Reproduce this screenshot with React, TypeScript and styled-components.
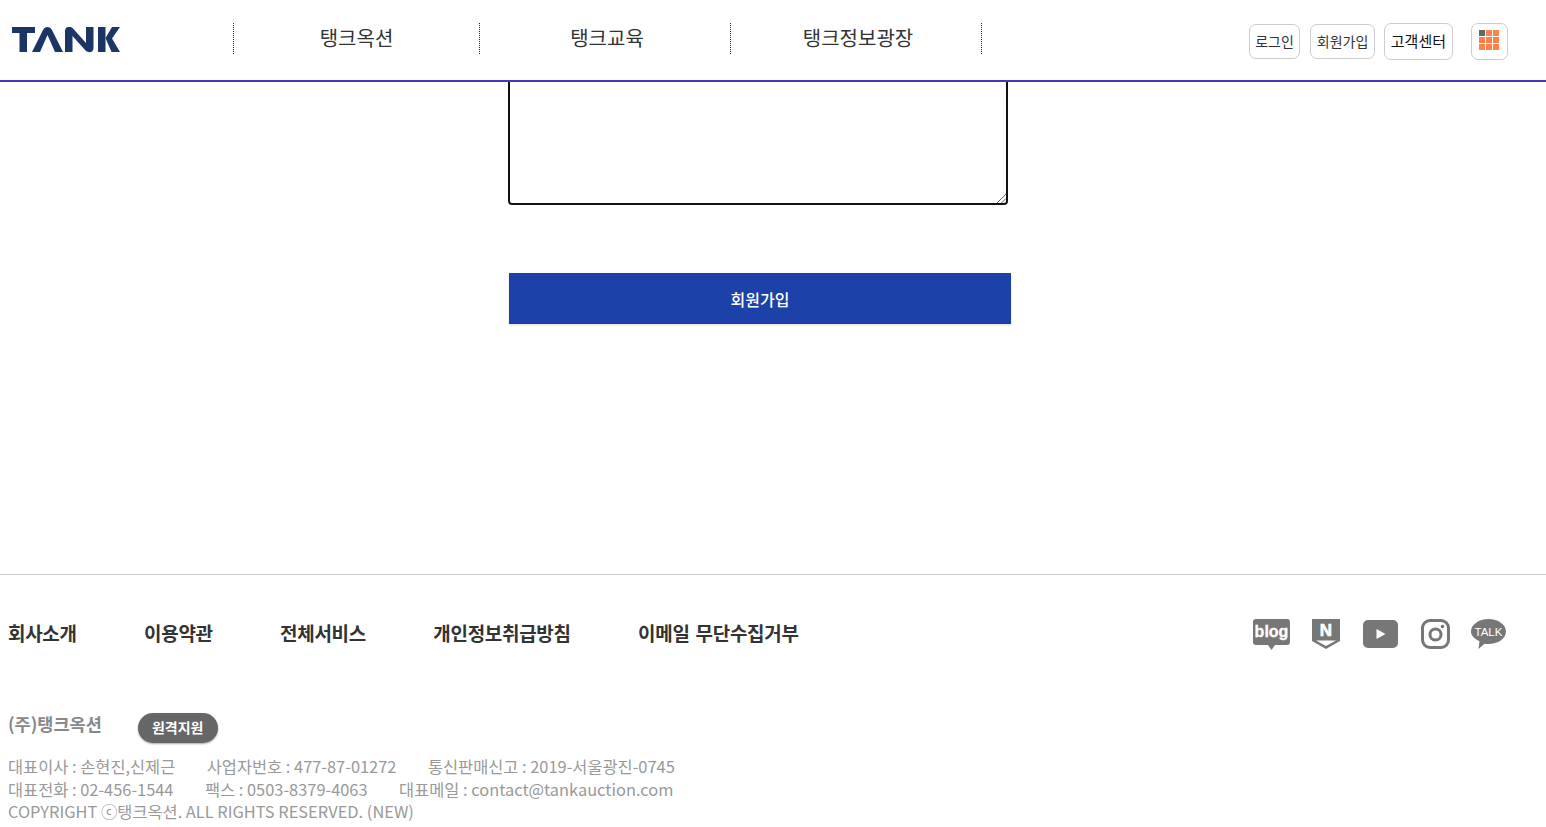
import styled, { createGlobalStyle } from "styled-components";

const GlobalStyle = createGlobalStyle`
  html, body {
    margin: 0;
    padding: 0;
    background: #fff;
    overflow: hidden;
  }
  body {
    font-family: "Noto Sans CJK KR", "Noto Sans", sans-serif;
  }
`;

const menus = ["탱크옥션", "탱크교육", "탱크정보광장"];
const footerLinks = ["회사소개", "이용약관", "전체서비스", "개인정보취급방침", "이메일 무단수집거부"];

const Logo = () => (
  <svg width="108" height="26" viewBox="0 0 108 26" fill="#1b3564">
    <path d="M0 0h23v6h-8v19H7.500V6H0z" />
    <path d="M20 25L31 3c2-4 7-4 9 0L51 25h-8L35.500 8 28 25z" />
    <path d="M53 25V4c0-4.500 5-5.500 8-2.500L74 16V0h7.500v21c0 4.500-5 5.500-8 2.500L60.500 9v16z" />
    <path d="M86 0h7.500v25H86z" />
    <path d="M93.500 11L100 0h8l-8 11.500L108 25h-8.500z" />
  </svg>
);

const BlogIcon = () => (
  <svg width="37" height="31" viewBox="0 0 37 31">
    <path d="M3 0h31a3 3 0 0 1 3 3v20a3 3 0 0 1-3 3H22l-3.500 5-3.500-5H3a3 3 0 0 1-3-3V3a3 3 0 0 1 3-3z" fill="#777" />
    <text x="18.500" y="18" textAnchor="middle" fontSize="16" fontWeight="700" fill="#fff" stroke="#fff" strokeWidth="0.3" fontFamily="Liberation Sans, sans-serif">blog</text>
  </svg>
);

const NaverIcon = () => (
  <svg width="29" height="30" viewBox="0 0 29 30">
    <path d="M0 0h28v22L14 30 0 22z" fill="#777" />
    <path d="M4 21.500h20L14 27z" fill="#fff" />
    <text x="14" y="17" textAnchor="middle" fontSize="17" fontWeight="700" fill="#fff" fontFamily="Liberation Sans, sans-serif" stroke="#fff" strokeWidth="0.6">N</text>
  </svg>
);

const YoutubeIcon = () => (
  <svg width="36" height="28" viewBox="0 0 36 28">
    <rect width="35" height="28" rx="5" fill="#777" />
    <path d="M13.500 9l9 5-9 5z" fill="#fff" />
  </svg>
);

const InstaIcon = () => (
  <svg width="28" height="30" viewBox="0 0 28 30" fill="none" stroke="#777" overflow="visible">
    <rect x="1.500" y="1.500" width="26" height="27" rx="7.500" strokeWidth="3" />
    <circle cx="14.500" cy="15.500" r="5.500" strokeWidth="3" />
    <circle cx="21.500" cy="7.500" r="1.800" fill="#777" stroke="none" />
  </svg>
);

const TalkIcon = () => (
  <svg width="35" height="30" viewBox="0 0 35 30">
    <path d="M17.500 0C27 0 35 5.500 35 12.500S27 25 17.500 25c-1.500 0-2.500 0-4-.3L7.500 30l1-7.800C3.500 20 0 16.500 0 12.500 0 5.500 8 0 17.500 0z" fill="#777" />
    <text x="17.500" y="17" textAnchor="middle" fontSize="11.500" fill="#fff" fontFamily="Liberation Sans, sans-serif">TALK</text>
  </svg>
);

const ResizeMark = () => (
  <svg width="10" height="10" viewBox="0 0 10 10" fill="none" stroke="#666" strokeWidth="1">
    <path d="M1 10L10 1M5.500 10L10 5.500" />
  </svg>
);

export default function App() {
  return (
    <>
      <GlobalStyle />
      <Header>
        <LogoBox>
          <Logo />
        </LogoBox>
        <Nav>
          {menus.map((menu) => (
            <NavItem key={menu}>{menu}</NavItem>
          ))}
        </Nav>
        <Utility>
          <UtilButton>로그인</UtilButton>
          <UtilButton>회원가입</UtilButton>
          <UtilButton $large>고객센터</UtilButton>
          <GridButton aria-label="전체메뉴">
            {Array.from({ length: 9 }).map((_, i) => (
              <GridCell key={i} $first={i === 0} />
            ))}
          </GridButton>
        </Utility>
      </Header>
      <Main>
        <MemoWrap>
          <Memo />
          <ResizeHandle>
            <ResizeMark />
          </ResizeHandle>
        </MemoWrap>
        <SubmitButton>회원가입</SubmitButton>
      </Main>
      <Footer>
        <FooterTop>
          <FooterNav>
            {footerLinks.map((link) => (
              <FooterLink key={link}>{link}</FooterLink>
            ))}
          </FooterNav>
          <Social>
            <BlogIcon />
            <NaverIcon />
            <YoutubeIcon />
            <InstaIcon />
            <TalkIcon />
          </Social>
        </FooterTop>
        <CompanyRow>
          <CompanyName>(주)탱크옥션</CompanyName>
          <RemoteButton>원격지원</RemoteButton>
        </CompanyRow>
        <InfoLine>
          <span>대표이사 : 손현진,신제근</span>
          <span>사업자번호 : 477-87-01272</span>
          <span>통신판매신고 : 2019-서울광진-0745</span>
        </InfoLine>
        <InfoLine>
          <span>대표전화 : 02-456-1544</span>
          <span>팩스 : 0503-8379-4063</span>
          <span>대표메일 : contact@tankauction.com</span>
        </InfoLine>
        <InfoLine>COPYRIGHT ⓒ탱크옥션. ALL RIGHTS RESERVED. (NEW)</InfoLine>
      </Footer>
    </>
  );
}

const Header = styled.header`
  position: relative;
  z-index: 10;
  display: flex;
  align-items: center;
  height: 80px;
  background: #fff;
  border-bottom: 2px solid #4338b5;
`;
const LogoBox = styled.div`
  display: flex;
  width: 221px;
  padding-left: 12px;
  margin-top: -1px;
`;
const Nav = styled.nav`
  display: flex;
  height: 31px;
  margin-top: -4px;
  border-left: 1px dotted #222;
`;
const NavItem = styled.a`
  display: flex;
  align-items: center;
  justify-content: center;
  width: 251px;
  padding: 0 0 1px 4px;
  border-right: 1px dotted #222;
  font-size: 20px;
  color: #333;
  box-sizing: border-box;
  &:first-child {
    width: 246px;
    padding-left: 0;
  }
`;
const Utility = styled.div`
  display: flex;
  align-items: center;
  margin: 3px 38px 0 auto;
  gap: 9px;
`;
const UtilButton = styled.button<{ $large?: boolean }>`
  height: ${(p) => (p.$large ? "37px" : "35px")};
  padding: 0 ${(p) => (p.$large ? "6px" : "5.500px")} 2px;
  background: #fff;
  border: 1px solid #ccc;
  border-radius: 7px;
  font-family: inherit;
  font-size: ${(p) => (p.$large ? "15px" : "14px")};
  color: ${(p) => (p.$large ? "#111" : "#333")};
  white-space: nowrap;
  &:first-child {
    margin-right: 1px;
  }
`;
const GridButton = styled.button`
  display: grid;
  grid-template-columns: repeat(3, 6px);
  grid-auto-rows: 6px;
  gap: 1px;
  align-content: center;
  justify-content: center;
  width: 37px;
  height: 37px;
  margin-left: 9px;
  padding: 0 1px 3px 0;
  background: #fff;
  border: 1px solid #ccc;
  border-radius: 7px;
`;
const GridCell = styled.span<{ $first?: boolean }>`
  background: ${(p) => (p.$first ? "#666" : "#ff8149")};
`;
const Main = styled.main`
  display: flex;
  flex-direction: column;
  align-items: flex-start;
  height: 492px;
  padding-left: 508px;
`;
const MemoWrap = styled.div`
  position: relative;
  width: 500px;
  height: 133px;
  margin-top: -10px;
`;
const Memo = styled.textarea`
  display: block;
  box-sizing: border-box;
  width: 100%;
  height: 100%;
  margin: 0;
  background: #fff;
  border: 2px solid #111;
  border-radius: 4px;
  outline: none;
  resize: none;
`;
const ResizeHandle = styled.span`
  position: absolute;
  right: 2px;
  bottom: 2px;
  display: flex;
`;
const SubmitButton = styled.button`
  width: 502px;
  height: 51px;
  margin: 68px 0 0 1px;
  background: #1c41a8;
  border: none;
  box-shadow: 0 1px 2px rgba(0, 0, 0, 0.15);
  color: #fff;
  font-family: inherit;
  font-size: 16px;
  font-weight: 500;
`;
const Footer = styled.footer`
  border-top: 1px solid #ccc;
  padding: 0 8px;
`;
const FooterTop = styled.div`
  display: flex;
  align-items: center;
  justify-content: space-between;
  height: 118px;
`;
const FooterNav = styled.nav`
  display: flex;
  gap: 67.300px;
  margin-bottom: 3px;
`;
const FooterLink = styled.a`
  font-size: 19px;
  font-weight: 700;
  letter-spacing: -0.300px;
  word-spacing: 2px;
  color: #333;
`;
const Social = styled.div`
  display: flex;
  align-items: center;
  gap: 22px;
  margin-right: 32px;
  svg {
    display: block;
  }
`;
const CompanyRow = styled.div`
  display: flex;
  align-items: center;
  gap: 36px;
  height: 32px;
  margin: 19px 0 11px;
`;
const CompanyName = styled.strong`
  font-size: 17.500px;
  font-weight: 700;
  color: #888;
  margin-top: -10px;
`;
const RemoteButton = styled.button`
  width: 80px;
  height: 30px;
  padding: 0 0 2px;
  background: #666;
  border: none;
  border-radius: 15px;
  box-shadow: 0 1px 2px rgba(0, 0, 0, 0.35);
  color: #fff;
  font-family: inherit;
  font-size: 14px;
  font-weight: 700;
`;
const InfoLine = styled.div`
  display: flex;
  gap: 31.500px;
  height: 22.500px;
  line-height: 22.500px;
  font-size: 16.400px;
  color: #999;
  white-space: nowrap;
`;
